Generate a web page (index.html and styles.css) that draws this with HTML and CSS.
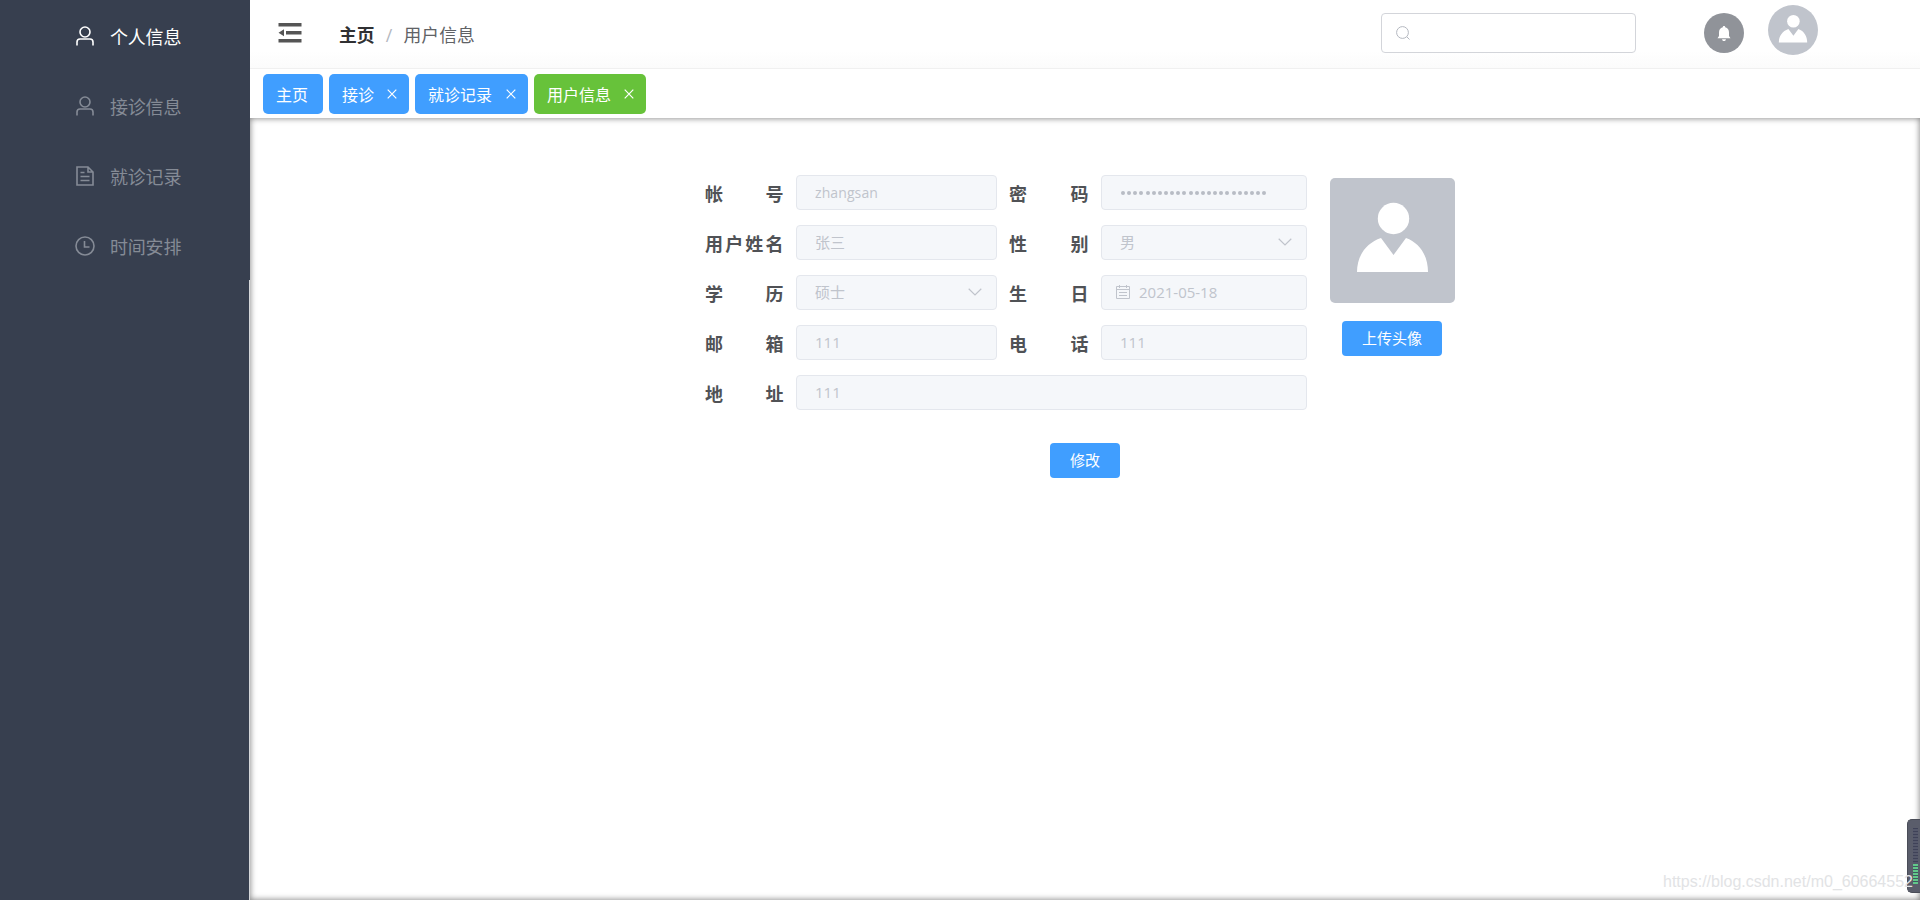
FILE: index.html
```html
<!DOCTYPE html>
<html lang="zh-CN">
<head>
<meta charset="utf-8">
<title>用户信息</title>
<link rel="stylesheet" href="styles.css">
</head>
<body>
<svg class="defs" width="0" height="0">
  <symbol id="user" viewBox="0 0 20 20"><circle cx="10" cy="6" r="5"/><path d="M2 19.500V16a3 3 0 0 1 3-3h10a3 3 0 0 1 3 3v3.500"/></symbol>
  <symbol id="doc" viewBox="0 0 20 20"><path d="M2 1h11l5 5v13H2zM13 1v5h5M5.500 6.500h4M5.500 10.500h9M5.500 14.500h9"/></symbol>
  <symbol id="clock" viewBox="0 0 20 20"><circle cx="10" cy="10" r="9"/><path d="M9.500 5v6h5"/></symbol>
  <symbol id="close" viewBox="0 0 10 10"><path d="M.7.7l8.600 8.600M9.300.7L.7 9.300"/></symbol>
  <symbol id="arrow" viewBox="0 0 14 8"><path d="M.7.8L7 7 13.300.8"/></symbol>
  <symbol id="person" viewBox="0 0 125 125"><circle cx="63.500" cy="40.500" r="15.700"/><path d="M27 94c0-16 9-29 24-34l12.500 17L76 60c14 5 22 18 22 34z"/></symbol>
</svg>
<div class="app">
  <nav class="sidebar">
    <a class="item active"><svg><use href="#user"/></svg><span>个人信息</span></a>
    <a class="item"><svg><use href="#user"/></svg><span>接诊信息</span></a>
    <a class="item"><svg><use href="#doc"/></svg><span>就诊记录</span></a>
    <a class="item"><svg><use href="#clock"/></svg><span>时间安排</span></a>
    <div class="rail"></div>
  </nav>
  <div class="content">
    <header class="header">
      <svg class="fold" viewBox="0 0 24 20"><path d="M.5 0h23v3.500H.5zM8 8h15.500v3.500H8zM.5 16h23v3.500H.5zM.5 9.700L6 6.300v6.900z"/></svg>
      <div class="crumbs"><b>主页</b><i>/</i><span>用户信息</span></div>
      <div class="search"><svg viewBox="0 0 14 14"><circle cx="6.500" cy="6.500" r="5.900"/><path d="M10.800 10.800l2.700 2.700"/></svg></div>
      <div class="bell"><svg viewBox="0 0 14 16"><path d="M7 0c.8 0 1.200.5 1.200 1.300C11 2 12 4 12 6.500V10l1.500 2.200H.5L2 10V6.500C2 4 3 2 5.800 1.300 5.800.5 6.200 0 7 0zM5 13.300h4c-.3 1.300-1 1.800-2 1.800s-1.700-.5-2-1.800z"/></svg></div>
      <div class="avatar"><svg><use href="#person"/></svg></div>
    </header>
    <div class="tabs">
      <span class="tab">主页</span>
      <span class="tab">接诊<svg><use href="#close"/></svg></span>
      <span class="tab long">就诊记录<svg><use href="#close"/></svg></span>
      <span class="tab current">用户信息<svg><use href="#close"/></svg></span>
    </div>
    <main class="main">
      <div class="profile">
        <div class="form">
          <label><span>帐</span><span>号</span></label>
          <div class="input name">zhangsan</div>
          <label><span>密</span><span>码</span></label>
          <div class="input dots"><i></i><i></i><i></i><i></i><i></i><i></i><i></i><i></i><i></i><i></i><i></i><i></i><i></i><i></i><i></i><i></i><i></i><i></i><i></i><i></i><i></i><i></i><i></i><i></i></div>
          <label><span>用</span><span>户</span><span>姓</span><span>名</span></label>
          <div class="input">张三</div>
          <label><span>性</span><span>别</span></label>
          <div class="input">男<svg class="arrow"><use href="#arrow"/></svg></div>
          <label><span>学</span><span>历</span></label>
          <div class="input">硕士<svg class="arrow"><use href="#arrow"/></svg></div>
          <label><span>生</span><span>日</span></label>
          <div class="input date"><svg class="calendar" viewBox="0 0 14 14"><path d="M.5 1.500h13v12H.5zM.5 4.500h13M3.500 0v3M10.500 0v3M3 7.500h8M3 10.500h8"/></svg>2021-05-18</div>
          <label><span>邮</span><span>箱</span></label>
          <div class="input">111</div>
          <label><span>电</span><span>话</span></label>
          <div class="input">111</div>
          <label><span>地</span><span>址</span></label>
          <div class="input wide">111</div>
        </div>
        <div class="photo">
          <div class="picture"><svg><use href="#person"/></svg></div>
          <div class="btn upload">上传头像</div>
        </div>
      </div>
      <div class="btn edit">修改</div>
    </main>
  </div>
</div>
<div class="meter"><div class="bars"><div class="level"></div></div></div>
<div class="watermark">https://blog.csdn.net/m0_60664552</div>
</body>
</html>
```
FILE: styles.css
```css
* { box-sizing: border-box; }
body {
  margin: 0;
  height: 900px;
  overflow: hidden;
  background: #fff;
  color: #606266;
  font-family: "Open Sans", "Noto Sans CJK SC", sans-serif;
}
svg { display: block; fill: none; stroke: currentColor; flex: none; }
.defs { position: absolute; }
.app { display: flex; height: 900px; }

.sidebar {
  display: flex;
  flex-direction: column;
  width: 250px;
  background: #373f4f;
}
.item {
  display: flex;
  align-items: center;
  height: 70px;
  padding: 2px 0 0 75px;
  color: #858b96;
  font-size: 18px;
  line-height: 24px;
}
.item svg { width: 20px; height: 20px; margin-right: 15px; stroke-width: 1.6; }
.item span { padding-top: 1px; letter-spacing: -.2px; }
.item.active { color: #fff; }
.rail { flex: 1; border-right: 1px solid #d5d7da; }

.content { flex: 1; display: flex; flex-direction: column; min-width: 0; }
.header {
  display: flex;
  height: 69px;
  padding-left: 28px;
  border-bottom: 1px solid #f0f0f0;
  background: linear-gradient(#fff 75%, #fbfbfb);
}
.fold { width: 24px; height: 20px; margin-top: 22.500px; fill: #555; stroke: none; }
.crumbs {
  display: flex;
  margin: 23px auto 0 37px;
  font-size: 17.800px;
  line-height: 24px;
}
.crumbs b { color: #303133; }
.crumbs i { width: 29px; text-align: center; color: #b4b8c0; font-style: normal; }
.crumbs span { color: #606266; }
.search {
  width: 255px;
  height: 40px;
  margin: 13px 68px 0 0;
  padding: 12px 14px;
  border: 1px solid #d3d5da;
  border-radius: 4px;
  color: #b4b8c0;
}
.search svg { width: 14px; height: 14px; }
.bell {
  width: 40px;
  height: 40px;
  margin: 13px 24px 0 0;
  padding: 13px;
  border-radius: 50%;
  background: #909399;
}
.bell svg { width: 14px; height: 16px; fill: #fff; stroke: none; }
.avatar {
  width: 50px;
  height: 50px;
  margin: 5px 102px 0 0;
  border-radius: 50%;
  background: #c0c4cc;
}
.avatar svg { width: 50px; height: 50px; fill: #fff; stroke: none; }

.tabs { display: flex; gap: 6px; height: 49px; padding: 5px 0 0 13px; }
.tab {
  display: flex;
  align-items: center;
  height: 40px;
  padding: 0 15px 1px 13px;
  border-radius: 5px;
  background: #409eff;
  color: #fff;
  font-size: 16px;
}
.tab svg { width: 10px; height: 10px; margin: 1px -3px 0 13px; stroke-width: 1.2; }
.tab.long svg { margin-left: 14px; }
.tab.current { background: #67c23a; }

.main {
  flex: 1;
  padding: 57px 0 0 455px;
  box-shadow: inset 0 0 6px #777;
}
.profile { display: flex; }
.form {
  display: grid;
  grid-template-columns: 79px 201px 80px 206px;
  grid-auto-rows: 35px;
  gap: 15px 12px;
  width: 602px;
}
label {
  display: flex;
  justify-content: space-between;
  padding: 6px .500px 0 0;
  color: #505256;
  font-size: 18px;
  font-weight: bold;
  line-height: 26px;
}
.input {
  display: flex;
  align-items: center;
  padding: 0 14px 2px 18px;
  border: 1px solid #e4e7ed;
  border-radius: 4px;
  background: #f5f7fa;
  color: #c0c4cc;
  font-size: 15px;
}
.name { padding-bottom: 0; font-size: 14px; letter-spacing: .1px; }
.wide { grid-column: 2 / 5; }
.arrow { width: 14px; height: 8px; margin-left: auto; stroke-width: 1.2; }
.dots { gap: 2.150px; padding: 1px 0 0 19px; }
.dots i { width: 4px; height: 4px; border-radius: 50%; background: #b8bcc4; }
.date { padding-left: 14px; }
.calendar { width: 14px; height: 14px; margin-right: 9px; }
.photo { margin: 3px 0 0 23px; }
.picture { width: 125px; height: 125px; border-radius: 5px; background: #c0c4cc; }
.picture svg { width: 125px; height: 125px; fill: #fff; stroke: none; }
.btn {
  display: flex;
  align-items: center;
  justify-content: center;
  height: 35px;
  padding-bottom: 2px;
  border-radius: 4px;
  background: #409eff;
  color: #fff;
  font-size: 15px;
}
.upload { width: 100px; margin: 18px 0 0 12px; }
.edit { width: 70px; margin: 33px 0 0 345px; }

.watermark {
  position: absolute;
  left: 1663px;
  top: 872px;
  color: #e2e3e5;
  font: 16px/20px "Liberation Sans", sans-serif;
}
.meter {
  position: absolute;
  left: 1907px;
  top: 819px;
  width: 13px;
  height: 74px;
  padding: 8px 2px 8px 5px;
  border: 1px solid #4a4d58;
  border-right: 0;
  border-radius: 5px 0 0 5px;
  background: #5a5d6b;
}
.bars {
  display: flex;
  align-items: flex-end;
  height: 56px;
  background: repeating-linear-gradient(#3f4258 0 1px, #55586b 1px 3px);
}
.level { width: 6px; height: 20px; background: repeating-linear-gradient(#62c98a 0 2px, #3f5a60 2px 3px); }
```
